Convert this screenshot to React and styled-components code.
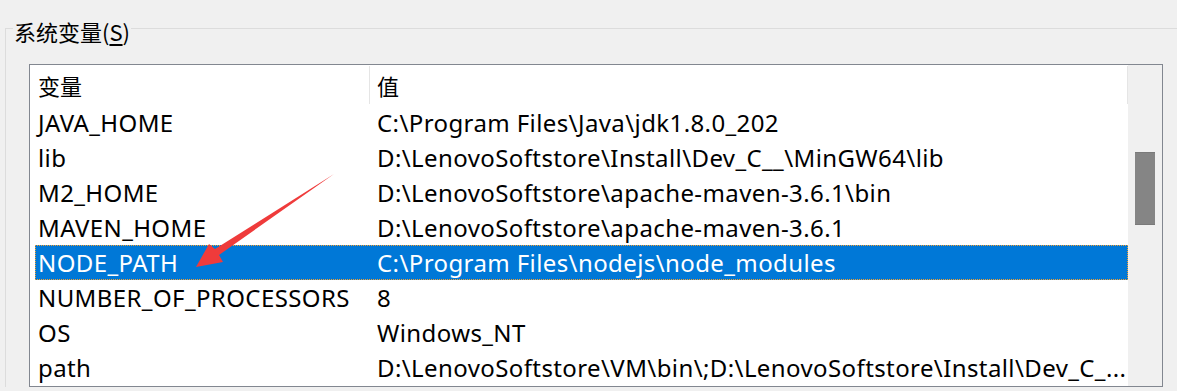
import React from 'react'
import styled, { createGlobalStyle } from 'styled-components'

const GlobalStyle = createGlobalStyle`
    html, body {
        margin: 0;
        padding: 0;
        background: #f0f0f0;
        overflow: hidden;
    }
    body {
        font-family: "Noto Sans", "Noto Sans CJK SC", sans-serif;
        font-size: 24px;
        color: #000;
    }
`

const Page = styled.div`
    position: relative;
    width: 1177px;
    height: 391px;
    overflow: hidden;
`

const Group = styled.fieldset`
    margin: 9px 0 0 5px;
    padding: 0;
    min-width: 0;
    border: 1px solid #dcdcdc;
    border-right: none;
    border-bottom: none;
`

const Legend = styled.legend`
    margin-left: 7px;
    padding: 6px 1px 0 1px;
    line-height: 32px;
    font-size: 22px;
    font-family: "Noto Sans CJK SC", sans-serif;
    u {
        text-decoration: underline;
        text-underline-offset: 3px;
    }
`

const ListBox = styled.div`
    margin: 17px 0 0 23px;
    width: 1134px;
    height: 323px;
    box-sizing: border-box;
    border: 1px solid #828790;
    background: #fff;
    display: flex;
`

const ListContent = styled.div`
    flex: 1;
    min-width: 0;
    display: flex;
    flex-direction: column;
`

const HeaderRow = styled.div`
    display: grid;
    grid-template-columns: 335px 1fr;
    height: 40px;
    margin-left: 5px;
`

const HeaderCell = styled.div`
    box-sizing: border-box;
    margin-top: 1px;
    height: 38px;
    padding-left: ${p => p.$pad}px;
    border-right: 1px solid #e5e5e5;
    display: flex;
    align-items: center;
    font-family: "Noto Sans CJK SC", sans-serif;
    font-size: 22px;
`

const Row = styled.div`
    display: grid;
    grid-template-columns: 339px 1fr;
    height: 35px;
    margin-left: 5px;
    align-items: center;
    letter-spacing: 0.4px;
    background: ${p => (p.$selected ? '#0078d7' : 'transparent')};
    color: ${p => (p.$selected ? '#fff' : '#000')};
    outline: ${p => (p.$selected ? '1px dotted #f5a030' : 'none')};
    outline-offset: -1px;
`

const Cell = styled.div`
    padding-left: 3px;
    white-space: nowrap;
    overflow: hidden;
    text-overflow: clip;
`

const ScrollTrack = styled.div`
    width: 34px;
    flex: none;
    background: #f0f0f0;
    padding-top: 87px;
    display: flex;
    justify-content: center;
    align-items: flex-start;
`

const ScrollThumb = styled.div`
    width: 20px;
    height: 73px;
    background: #858585;
    border-top: 1px solid #7a7a7a;
    border-bottom: 1px solid #7a7a7a;
    box-sizing: border-box;
`

const Arrow = styled.svg`
    position: absolute;
    left: 0;
    top: 0;
    pointer-events: none;
`

const rows = [
    ['JAVA_HOME', 'C:\\Program Files\\Java\\jdk1.8.0_202'],
    ['lib', 'D:\\LenovoSoftstore\\Install\\Dev_C__\\MinGW64\\lib'],
    ['M2_HOME', 'D:\\LenovoSoftstore\\apache-maven-3.6.1\\bin'],
    ['MAVEN_HOME', 'D:\\LenovoSoftstore\\apache-maven-3.6.1'],
    ['NODE_PATH', 'C:\\Program Files\\nodejs\\node_modules'],
    ['NUMBER_OF_PROCESSORS', '8'],
    ['OS', 'Windows_NT'],
    ['path', 'D:\\LenovoSoftstore\\VM\\bin\\;D:\\LenovoSoftstore\\Install\\Dev_C_...'],
]

const App = () => {
    return (
        <Page>
            <GlobalStyle />
            <Group>
                <Legend>系统变量(<u>S</u>)</Legend>
                <ListBox>
                    <ListContent>
                        <HeaderRow>
                            <HeaderCell $pad={3}>变量</HeaderCell>
                            <HeaderCell $pad={7}>值</HeaderCell>
                        </HeaderRow>
                        {rows.map(([name, value]) => (
                            <Row key={name} $selected={name === 'NODE_PATH'}>
                                <Cell>{name}</Cell>
                                <Cell>{value}</Cell>
                            </Row>
                        ))}
                    </ListContent>
                    <ScrollTrack>
                        <ScrollThumb />
                    </ScrollTrack>
                </ListBox>
            </Group>

            {/* red annotation arrow pointing at NODE_PATH */}
            <Arrow width="1177" height="391" viewBox="0 0 1177 391">
                <polygon
                    points="196,267 209,244 215,249 334,174 219,255 223,262"
                    fill="#ef3b3b"
                />
            </Arrow>
        </Page>
    )
}

export default App
